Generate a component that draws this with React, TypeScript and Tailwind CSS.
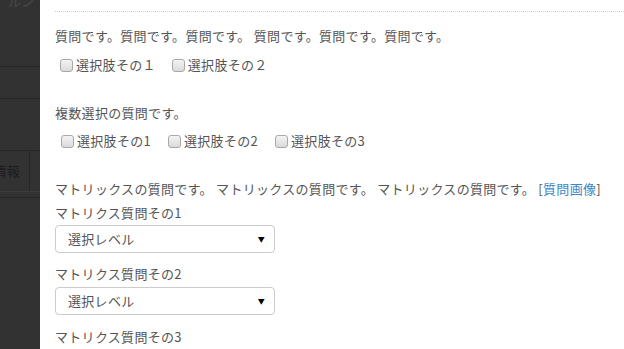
import React from 'react'

const font = { fontFamily: '"Noto Sans CJK JP", "Noto Sans", sans-serif' }

function Check({ label, className = '' }: { label: string; className?: string }) {
  return (
    <label className={`flex items-center h-[20px] ${className}`}>
      <input
        type="checkbox"
        className="appearance-none w-[13px] h-[13px] rounded-[3px] border border-[#a9a9a9] bg-gradient-to-b from-[#f4f4f4] to-[#d9d9d9] mr-[3px]"
      />
      <span>{label}</span>
    </label>
  )
}

function LevelSelect() {
  return (
    <div className="relative w-[220px] h-[28px]">
      <select className="appearance-none w-full h-full border border-[#cccccc] rounded-[4px] bg-white pl-[12px] text-[13px] text-[#555] tracking-[0.3px]">
        <option>選択レベル</option>
      </select>
      <span className="absolute right-[10px] top-[9px] text-[7px] leading-[10px] text-black pointer-events-none">▼</span>
    </div>
  )
}

export default function App() {
  return (
    <div className="flex w-[624px] h-[349px] overflow-hidden text-[13px] text-[#555] tracking-[0.3px]" style={font}>
      {/* dimmed sidebar */}
      <div className="w-[40px] shrink-0 bg-[#323232] flex flex-col text-[#1c1c1c]">
        <div className="h-[67px] border-b border-[#262626] relative">
          <span className="absolute -top-[9px] left-[8px] text-[13px] text-[#4a4a4a]">ルン</span>
        </div>
        <div className="h-[32px] border-b border-[#262626]" />
        <div className="h-[52px] border-b border-[#262626]" />
        <div className="h-[41px] border-b border-[#3c3c3c] flex">
          <span className="w-[30px] border-r border-[#262626] flex items-center justify-end pr-[9px] whitespace-nowrap overflow-hidden">
            <span>情報</span>
          </span>
        </div>
        <div className="h-[6px] border-b border-[#262626]" />
      </div>

      {/* modal content */}
      <div className="flex-1 bg-white pl-[15px]">
        <div className="mt-[11px] border-t border-dotted border-[#cfcfcf]" />

        <p className="mt-[14px] leading-[20px]">質問です。質問です。質問です。 質問です。質問です。質問です。</p>
        <div className="flex mt-[9px] pl-[5px]">
          <Check label="選択肢その１" />
          <Check label="選択肢その２" className="ml-[16px]" />
        </div>

        <p className="mt-[28px] leading-[20px]">複数選択の質問です。</p>
        <div className="flex mt-[8px] pl-[6px]">
          <Check label="選択肢その1" />
          <Check label="選択肢その2" className="ml-[17px]" />
          <Check label="選択肢その3" className="ml-[17px]" />
        </div>

        <p className="mt-[28px] leading-[20px]">
          マトリックスの質問です。 マトリックスの質問です。 マトリックスの質問です。 [
          <span className="text-[#3a87c8]">質問画像</span>]
        </p>
        <p className="mt-[4px] leading-[20px]">マトリクス質問その1</p>
        <div className="mt-[2px]">
          <LevelSelect />
        </div>
        <p className="mt-[11px] leading-[20px]">マトリクス質問その2</p>
        <div className="mt-[3px]">
          <LevelSelect />
        </div>
        <p className="mt-[12px] leading-[20px]">マトリクス質問その3</p>
        <div className="mt-[3px]">
          <LevelSelect />
        </div>
      </div>
    </div>
  )
}
